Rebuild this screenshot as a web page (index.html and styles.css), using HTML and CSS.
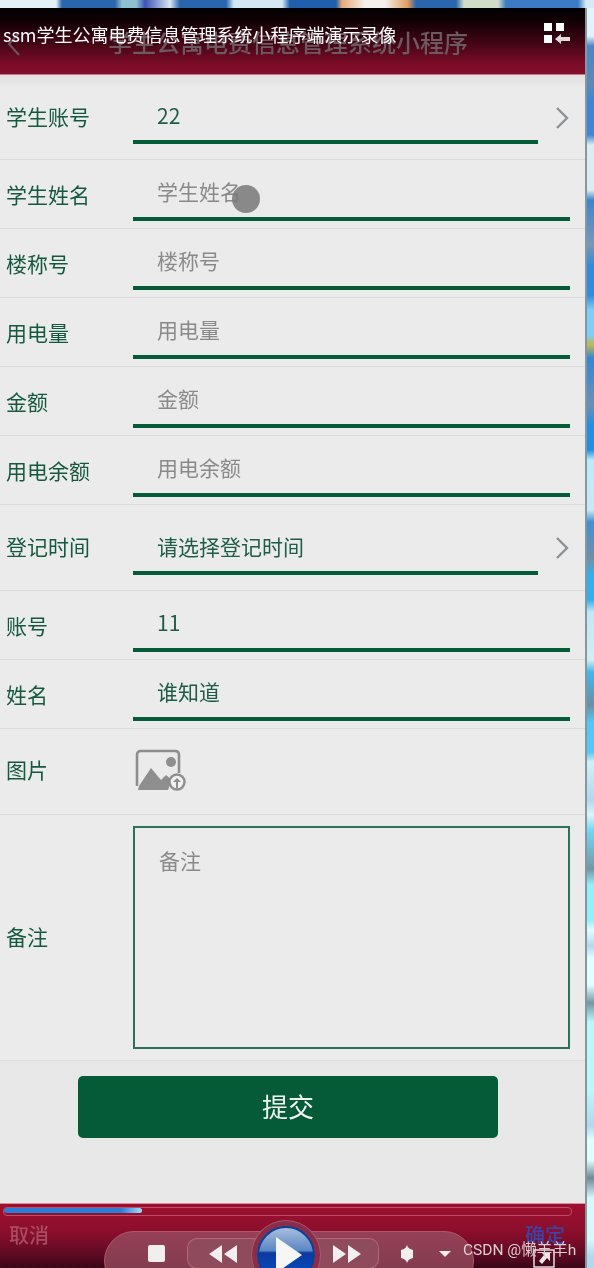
FILE: index.html
```html
<!DOCTYPE html>
<html lang="zh">
<head>
    <meta charset="UTF-8">
    <meta name="viewport" content="width=device-width, initial-scale=1.0">
    <title>学生公寓电费信息管理系统小程序</title>
    <link rel="stylesheet" href="styles.css">
</head>
<body>

<div class="desktop">
    <div class="top-strip"></div>
    <div class="window">
        <!-- Player title bar over the app header -->
        <div class="header">
            <svg class="back" width="16" height="28" viewBox="0 0 16 28"><path d="M13 3 3 14l10 11" fill="none" stroke="#6d5560" stroke-width="2"/></svg>
            <span class="app-title">学生公寓电费信息管理系统小程序</span>
            <span class="video-title">ssm学生公寓电费信息管理系统小程序端演示录像</span>
            <svg class="switch" width="28" height="24" viewBox="0 0 28 24">
                <path d="M1 1h8v8H1zM13 1h8v8h-8zM1 13h8v8H1z" fill="#fff"/>
                <path d="M12 17l6-5v3h9v4h-9v3z" fill="#ddd"/>
            </svg>
        </div>

        <!-- Form -->
        <form class="form">
            <div class="row row-first">
                <label class="label">学生账号</label>
                <div class="field field-short value">22</div>
                <svg class="arrow" width="16" height="24" viewBox="0 0 16 24"><path d="M3 2l10 10L3 22" fill="none" stroke="#8b9298" stroke-width="2.4"/></svg>
            </div>
            <div class="row">
                <label class="label">学生姓名</label>
                <div class="field">学生姓名</div>
            </div>
            <div class="row">
                <label class="label">楼称号</label>
                <div class="field">楼称号</div>
            </div>
            <div class="row">
                <label class="label">用电量</label>
                <div class="field">用电量</div>
            </div>
            <div class="row">
                <label class="label">金额</label>
                <div class="field">金额</div>
            </div>
            <div class="row">
                <label class="label">用电余额</label>
                <div class="field">用电余额</div>
            </div>
            <div class="row row-time">
                <label class="label">登记时间</label>
                <div class="field field-short value">请选择登记时间</div>
                <svg class="arrow" width="16" height="24" viewBox="0 0 16 24"><path d="M3 2l10 10L3 22" fill="none" stroke="#8b9298" stroke-width="2.4"/></svg>
            </div>
            <div class="row">
                <label class="label">账号</label>
                <div class="field value">11</div>
            </div>
            <div class="row">
                <label class="label">姓名</label>
                <div class="field value">谁知道</div>
            </div>
            <div class="row row-image">
                <label class="label">图片</label>
                <svg class="upload" width="54" height="44" viewBox="0 0 54 44">
                    <path d="M4 37V6q0-4 4-4h34q4 0 4 4v18" fill="none" stroke="#8e8e8e" stroke-width="2.6"/>
                    <path d="M5 41 6 37 18 19l10 12 5-5 6 5-4 10z" fill="#8e8e8e"/>
                    <circle cx="38" cy="13" r="5" fill="#8e8e8e"/>
                    <circle cx="44" cy="33" r="7.5" fill="#f0f0f0" stroke="#8e8e8e" stroke-width="2.4"/>
                    <path d="M40 33l4-4 4 4h-3v6h-2v-6z" fill="#8e8e8e"/>
                </svg>
            </div>
            <div class="row row-note">
                <label class="label">备注</label>
                <div class="note">备注</div>
            </div>
            <div class="actions">
                <button type="button" class="submit">提交</button>
            </div>
        </form>

        <!-- Player bar -->
        <div class="player">
            <div class="progress"><div class="progress-done"></div></div>
            <div class="player-under">
                <span class="cancel">取消</span>
                <span class="confirm">确定</span>
            </div>
            <div class="controls">
                <span class="stop"></span>
                <div class="seek seek-left">
                    <svg width="30" height="18" viewBox="0 0 30 18"><path d="M14 0v18L1 9zM29 0v18L16 9z" fill="#f4eeee"/></svg>
                </div>
                <div class="play">
                    <svg width="28" height="36" viewBox="0 0 28 36"><path d="M1 0l26 18L1 36z" fill="#f6f6f6"/></svg>
                </div>
                <div class="seek seek-right">
                    <svg width="30" height="18" viewBox="0 0 30 18"><path d="M1 0v18l13-9zM16 0v18l13-9z" fill="#f4eeee"/></svg>
                </div>
                <svg class="volume" width="14" height="18" viewBox="0 0 14 18"><path d="M7 0q1 4 6 5v8q-5 1-6 5-1-4-6-5V5q5-1 6-5z" fill="#f4eeee"/></svg>
                <svg class="caret" width="12" height="6" viewBox="0 0 12 6"><path d="M0 0h12L6 6z" fill="#f4eeee"/></svg>
            </div>
            <svg class="resize" width="22" height="22" viewBox="0 0 22 22"><path d="M1 4h20v17H1z" fill="none" stroke="#e6e0e0" stroke-width="1.5"/><path d="M8 6h9v9l-3-3-5 6-3-3 5-6z" fill="#efe9e9"/></svg>
            <span class="watermark">CSDN @懒羊羊h</span>
        </div>

        <div class="cursor"></div>
    </div>
</div>

</body>
</html>
```

FILE: styles.css
```css
html, body {
    margin: 0;
    height: 100%;
    overflow: hidden;
}
body {
    font-family: "Noto Sans CJK SC", "Liberation Sans", sans-serif;
    background: linear-gradient(180deg,
        #dff4fc 0, #dff4fc 36px, #4a86c8 46px, #5a8ab8 85px, #3f86d8 100px, #3f86d8 135px,
        #d8eef0 145px, #d8eef0 190px, #3a86d0 200px, #7898b8 245px, #2f8ce0 265px, #2f8ce0 295px,
        #7ad0f8 310px, #7ad0f8 335px, #c0b850 345px, #2f88d8 358px, #6a90b8 405px, #1f90e8 425px, #1f90e8 450px,
        #b8ecfc 460px, #c8e8f8 510px, #3f90d8 522px, #6e90a8 558px, #30b0f0 575px, #30b0f0 600px,
        #c0e8f8 612px, #d0eef4 660px, #40b8f0 672px, #6890a8 705px, #50c8f8 722px, #50c8f8 752px,
        #cff0f6 762px, #b0d8f0 800px, #d8f6fa 815px, #70d8f8 830px, #7098a8 869px, #90f0fc 885px, #90f0fc 920px,
        #e0ffff 930px, #b0d8f0 946px, #e0ffff 958px, #e0ffff 985px, #7098a8 1003px, #b8f8ff 1022px, #b8f8ff 1090px,
        #b0d8f0 1126px, #e0ffff 1140px, #e0ffff 1160px, #708898 1178px, #d8f8fc 1198px, #d8f8fc 1240px, #b0d8f0 1256px);
}
.desktop {
    display: flex;
    flex-direction: column;
    height: 1268px;
}
.top-strip {
    height: 8px;
    flex: none;
    background: linear-gradient(90deg,
        #e4f0f8 0, #e4f0f8 56px, #2a66ae 62px, #2a66ae 115px, #8fc0d0 122px, #8fc0d0 136px, #3c53b4 145px,
        #d8e8f2 170px, #2a66ae 180px, #2a66ae 226px, #d4e8f4 234px, #d4e8f4 282px, #1f5fae 290px, #1f5fae 336px,
        #e8a878 342px, #f4f0ea 365px, #f4f0ea 385px, #e09a5c 408px, #2a66ae 416px, #2a66ae 456px, #d0dcc8 464px,
        #d0dcc8 498px, #3b7cc4 506px, #3b7cc4 578px, #d8eaf6 586px);
}
.window {
    position: relative;
    display: flex;
    flex-direction: column;
    width: 585px;
    flex: 1;
    min-height: 0;
    background: #ebebeb;
    border-right: 2px solid #8d959b;
    filter: blur(0.5px);
}

/* header */
.header {
    position: relative;
    height: 67px;
    flex: none;
    display: flex;
    align-items: center;
    justify-content: center;
    background: linear-gradient(180deg, #020002 0%, #0e0104 18%, #4a0618 58%, #7c0c28 85%, #820e2a 100%);
    border-bottom: 1px solid #c9747f;
    box-sizing: border-box;
}
.back {
    position: absolute;
    left: 6px;
    top: 22px;
}
.app-title {
    font-size: 24px;
    color: #6d5a60;
    font-weight: 500;
    margin-top: 1px;
    margin-right: 9px;
}
.video-title {
    position: absolute;
    left: 3px;
    top: 12px;
    font-size: 18px;
    line-height: 28px;
    color: #fff;
    white-space: nowrap;
}
.switch {
    position: absolute;
    right: 14px;
    top: 14px;
}

/* form rows */
.form {
    flex: 1;
    display: flex;
    flex-direction: column;
    min-height: 0;
}
.row {
    position: relative;
    height: 69px;
    flex: none;
    display: flex;
    align-items: flex-end;
    box-sizing: border-box;
    border-bottom: 1px solid #dcdcdc;
    padding: 0 15px 7px 6px;
}
.row-first {
    height: 85px;
    padding-bottom: 15px;
    background: linear-gradient(180deg, #e0e0e0 0, #ebebeb 14px);
}
.row-time {
    height: 86px;
    padding-bottom: 15px;
}
.label {
    width: 127px;
    flex: none;
    font-size: 21px;
    line-height: 30px;
    color: #14593f;
    margin-bottom: 12px;
}
.row-first .label {
    margin-bottom: 13px;
}
.row-time .label {
    margin-bottom: 14px;
}
.field {
    flex: 1;
    height: 49px;
    box-sizing: border-box;
    border-bottom: 4px solid #055a38;
    padding: 4px 0 0 24px;
    font-size: 21px;
    line-height: 30px;
    color: #8a8a8a;
}
.field-short {
    flex: none;
    width: 405px;
    padding-top: 2px;
    line-height: 36px;
}
.value {
    color: #1d5c46;
}
.arrow {
    position: absolute;
    right: 15px;
}
.row-first .arrow {
    top: 31px;
}
.row-time .arrow {
    top: 31px;
}
.row-image {
    height: 86px;
    align-items: center;
    padding-bottom: 0;
}
.row-image .label {
    margin-bottom: 6px;
}
.upload {
    margin-top: -2px;
}
.row-note {
    height: 246px;
    align-items: center;
    padding: 0 15px 0 6px;
}
.row-note .label {
    margin-bottom: 4px;
}
.note {
    flex: 1;
    height: 223px;
    box-sizing: border-box;
    border: 2px solid #2b7058;
    padding: 17px 0 0 24px;
    font-size: 21px;
    line-height: 30px;
    color: #8a8a8a;
}
.actions {
    display: flex;
    justify-content: center;
    padding: 15px 87px 0 78px;
    height: 143px;
    box-sizing: border-box;
    background: #e8e8e8;
}
.submit {
    width: 420px;
    height: 62px;
    border: none;
    border-radius: 5px;
    padding: 0 0 4px;
    background: #055a38;
    color: #f0f4f2;
    font-family: inherit;
    font-size: 26px;
}

/* player bar */
.player {
    position: relative;
    height: 65px;
    flex: none;
    overflow: hidden;
    background: linear-gradient(180deg, #a01030 0%, #8a0e2c 45%, #5c0a22 80%, #3a0616 100%);
    border-top: 1px solid #d8909c;
    box-sizing: border-box;
}
.progress {
    margin: 3px 13px 0 3px;
    height: 7px;
    border: 1px solid #b85068;
    border-radius: 4px;
}
.progress-done {
    width: 138px;
    height: 5px;
    border-radius: 3px;
    background: linear-gradient(90deg, #2b7ed8 0%, #2b7ed8 85%, #a8dcf8 100%);
}
.player-under {
    display: flex;
    justify-content: space-between;
    padding: 5px 20px 0 9px;
    font-size: 20px;
    line-height: 28px;
    font-weight: 500;
}
.cancel {
    color: #a84b62;
}
.confirm {
    color: #3b44a8;
}
.controls {
    position: absolute;
    left: 104px;
    top: 27px;
    width: 370px;
    height: 60px;
    box-sizing: border-box;
    display: flex;
    align-items: flex-start;
    padding: 6px 0 0 43px;
    border-radius: 30px;
    border: 1px solid #b0586c;
    background: linear-gradient(180deg, #954056 0%, #7a3a4c 100%);
}
.stop {
    width: 17px;
    height: 17px;
    margin-top: 7px;
    border-radius: 2px;
    background: #f2eeee;
    flex: none;
}
.seek {
    width: 70px;
    height: 31px;
    flex: none;
    display: flex;
    align-items: center;
    justify-content: center;
    border: 1px solid #b0687a;
    background: #8f4a5c;
    box-sizing: border-box;
}
.seek-left {
    margin-left: 22px;
    border-radius: 10px 0 0 10px;
    border-right: none;
}
.seek-right {
    width: 64px;
    border-radius: 0 10px 10px 0;
    border-left: none;
}
.play {
    width: 58px;
    height: 58px;
    flex: none;
    margin: -12px 0 0;
    box-sizing: border-box;
    display: flex;
    align-items: center;
    justify-content: center;
    position: relative;
    padding-left: 6px;
    border-radius: 50%;
    border: 2px solid #0b3f98;
    box-shadow: 0 0 0 5px #8b2c48, 0 0 0 6px #a05a74;
    background: linear-gradient(180deg, #a8bedd 0%, #5a86c4 42%, #0a3aa0 46%, #0a52c8 100%);
}
.volume {
    margin: 7px 0 0 21px;
    flex: none;
}
.caret {
    margin: 13px 0 0 25px;
    flex: none;
}
.resize {
    position: absolute;
    left: 533px;
    top: 42px;
}
.watermark {
    position: absolute;
    left: 463px;
    top: 35px;
    font-size: 15.5px;
    line-height: 22px;
    color: #d8d0d2;
    font-family: Roboto, "Noto Sans CJK SC", sans-serif;
    white-space: nowrap;
}
.cursor {
    position: absolute;
    left: 232px;
    top: 177px;
    width: 28px;
    height: 28px;
    border-radius: 50%;
    background: rgba(120, 120, 120, 0.85);
}
```
